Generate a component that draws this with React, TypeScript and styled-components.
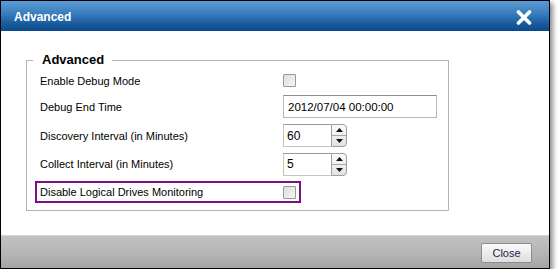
import React from "react";
import styled, { createGlobalStyle } from "styled-components";

const GlobalStyle = createGlobalStyle`
  html, body {
    margin: 0;
    padding: 0;
    background: #ffffff;
  }
  body {
    font-family: "Liberation Sans", Arial, sans-serif;
    font-size: 11px;
    color: #000;
  }
`;

interface Setting {
  label: string;
  kind: "check" | "text" | "spin";
  value?: string;
  height: number;
  highlighted?: boolean;
}

const settings: Setting[] = [
  { label: "Enable Debug Mode", kind: "check", height: 17 },
  { label: "Debug End Time", kind: "text", value: "2012/07/04 00:00:00", height: 23 },
  { label: "Discovery Interval (in Minutes)", kind: "spin", value: "60", height: 23 },
  { label: "Collect Interval (in Minutes)", kind: "spin", value: "5", height: 22 },
  { label: "Disable Logical Drives Monitoring", kind: "check", height: 22, highlighted: true },
];

const Spinner = ({ value }: { value: string }) => (
  <SpinBox>
    <SpinInput readOnly value={value} />
    <SpinButtons>
      <SpinArrow>
        <svg width="7" height="4" viewBox="0 0 7 4">
          <path d="M0 4 L3.5 0 L7 4 Z" fill="#111" />
        </svg>
      </SpinArrow>
      <SpinArrow $bottom>
        <svg width="7" height="4" viewBox="0 0 7 4">
          <path d="M0 0 L7 0 L3.5 4 Z" fill="#111" />
        </svg>
      </SpinArrow>
    </SpinButtons>
  </SpinBox>
);

const App = () => {
  return (
    <>
      <GlobalStyle />
      <Dialog>
        <TitleBar>
          <Title>Advanced</Title>
          <CloseIcon viewBox="0 0 16 15" width="16" height="15">
            <path
              d="M2.5 2 L13.5 13 M13.5 2 L2.5 13"
              stroke="#fff"
              strokeWidth="3.6"
              strokeLinecap="round"
            />
          </CloseIcon>
        </TitleBar>

        <Body>
          <Group>
            <Legend>Advanced</Legend>
            <Rows>
              {settings.map((s) => (
                <Row key={s.label} $height={s.height} $highlighted={s.highlighted}>
                  <Label>{s.label}</Label>
                  {s.kind === "check" && <CheckBox />}
                  {s.kind === "text" && <TextInput readOnly value={s.value} />}
                  {s.kind === "spin" && <Spinner value={s.value ?? ""} />}
                </Row>
              ))}
            </Rows>
          </Group>
        </Body>

        <Footer>
          <Button>Close</Button>
        </Footer>
      </Dialog>
    </>
  );
};

const Dialog = styled.div`
  width: 548px;
  height: 267px;
  border: 1px solid #000;
  display: flex;
  flex-direction: column;
  background: #fff;
  box-shadow: 3px 3px 5px rgba(0, 0, 0, 0.45);
`;

const TitleBar = styled.div`
  height: 30px;
  flex: none;
  display: flex;
  align-items: center;
  justify-content: space-between;
  padding: 0 17px 0 13px;
  background: linear-gradient(to bottom, #5c9bd4 0%, #3b7fbf 40%, #1a5c9f 75%, #0a4a8c 100%);
`;

const Title = styled.span`
  color: #fff;
  font-weight: bold;
  font-size: 12px;
  margin-top: 2px;
`;

const CloseIcon = styled.svg`
  display: block;
  margin-top: 2px;
`;

const Body = styled.div`
  height: 204px;
  flex: none;
  padding: 21px 0 0 25px;
  box-sizing: border-box;
`;

const Group = styled.fieldset`
  width: 423px;
  box-sizing: border-box;
  margin: 0;
  padding: 4px 0 7px 8px;
  border: 1px solid #b4b4b4;
`;

const Legend = styled.legend`
  font-weight: bold;
  font-size: 13px;
  line-height: 16px;
  color: #000;
  margin-left: -2px;
  padding: 0 8px 0 9px;
`;

const Rows = styled.div`
  display: flex;
  flex-direction: column;
  gap: 6px;
`;

const Row = styled.div<{ $height: number; $highlighted?: boolean }>`
  width: 266px;
  height: ${({ $height }) => `${$height}px`};
  box-sizing: border-box;
  display: flex;
  align-items: center;
  border: 2px solid ${({ $highlighted }) => ($highlighted ? "#7f0f80" : "transparent")};
  padding-left: 3px;
`;

const Label = styled.span`
  width: 243px;
  flex: none;
  white-space: nowrap;
`;

const CheckBox = styled.span`
  width: 13px;
  height: 13px;
  box-sizing: border-box;
  flex: none;
  border: 1px solid #9a9a9a;
  border-radius: 1px;
  background: linear-gradient(to bottom right, #dcdcdc, #f7f7f7);
`;

const TextInput = styled.input`
  width: 154px;
  height: 23px;
  box-sizing: border-box;
  flex: none;
  margin: 0;
  padding: 0 4px;
  border: 1px solid #b7b7b7;
  border-top-color: #8e8e8e;
  font-family: "Liberation Sans", Arial, sans-serif;
  font-size: 11.5px;
  color: #000;
  outline: none;
`;

const SpinBox = styled.div`
  display: flex;
  flex: none;
  height: 23px;
`;

const SpinInput = styled.input`
  width: 48px;
  height: 100%;
  box-sizing: border-box;
  margin: 0;
  padding: 0 3px;
  border: 1px solid #c4c4c4;
  border-top-color: #9a9a9a;
  border-right: none;
  font-family: "Liberation Sans", Arial, sans-serif;
  font-size: 12px;
  color: #000;
  outline: none;
`;

const SpinButtons = styled.div`
  width: 16px;
  height: 100%;
  box-sizing: border-box;
  display: flex;
  flex-direction: column;
  border: 1px solid #9e9e9e;
  border-radius: 0 4px 4px 0;
  overflow: hidden;
  background: linear-gradient(to bottom, #fbfbfb, #e2e2e2);
`;

const SpinArrow = styled.div<{ $bottom?: boolean }>`
  flex: 1;
  display: flex;
  align-items: center;
  justify-content: center;
  border-top: ${({ $bottom }) => ($bottom ? "1px solid #a8a8a8" : "none")};
`;

const Footer = styled.div`
  flex: 1;
  display: flex;
  justify-content: flex-end;
  align-items: flex-start;
  padding: 7px 17px 0 0;
  border-top: 1px solid #d6d6d6;
  background: linear-gradient(to bottom, #c2c2c2, #b3b3b3 60%, #a4a4a4);
`;

const Button = styled.button`
  width: 51px;
  height: 20px;
  box-sizing: border-box;
  margin: 0;
  padding: 0;
  border: 1px solid #8d8d8d;
  border-radius: 2px;
  background: linear-gradient(to bottom, #fafafa, #dedede);
  font-family: "Liberation Sans", Arial, sans-serif;
  font-size: 11px;
  color: #1b2452;
`;

export default App;
